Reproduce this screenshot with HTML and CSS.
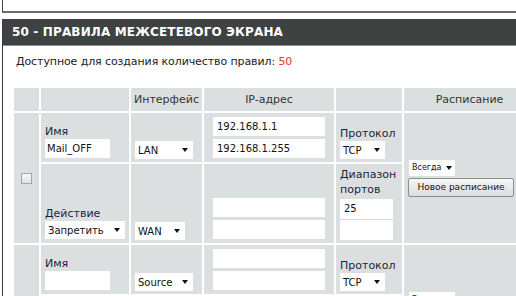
FILE: index.html
```html
<!DOCTYPE html>
<html lang="ru">
<head>
<meta charset="utf-8">
<title>Правила межсетевого экрана</title>
<link rel="stylesheet" href="styles.css">
</head>
<body>
<div class="topbox"></div>
<section class="panel">
  <h2 class="panel-title">50 - ПРАВИЛА МЕЖСЕТЕВОГО ЭКРАНА</h2>
  <p class="avail">Доступное для создания количество правил: <span class="count">50</span></p>
  <table class="rules">
    <colgroup>
      <col class="c-check"><col class="c-name"><col class="c-iface"><col class="c-ip"><col class="c-proto"><col class="c-sched">
    </colgroup>
    <tr class="r-head">
      <td></td><td></td><td>Интерфейс</td><td>IP-адрес</td><td></td><td>Расписание</td>
    </tr>
    <tr class="r-top">
      <td rowspan="2" class="cell-check"><input type="checkbox" class="chk"></td>
      <td class="cell-name"><span class="lbl">Имя</span><input class="inp inp-name" value="Mail_OFF"></td>
      <td class="cell-iface"><span class="sel sel-58"><span class="sel-val">LAN</span><span class="caret"></span></span></td>
      <td class="cell-ip"><input class="inp inp-ip" value="192.168.1.1"><input class="inp inp-ip" value="192.168.1.255"></td>
      <td class="cell-proto"><span class="lbl">Протокол</span><span class="sel sel-45"><span class="sel-val">TCP</span><span class="caret"></span></span></td>
      <td rowspan="2" class="cell-sched"><span class="sel sel-46 sel-small"><span class="sel-val">Всегда</span><span class="caret"></span></span><button class="btn">Новое расписание</button></td>
    </tr>
    <tr class="r-bot">
      <td class="cell-name"><span class="lbl">Действие</span><span class="sel sel-80"><span class="sel-val">Запретить</span><span class="caret"></span></span></td>
      <td class="cell-iface"><span class="sel sel-50"><span class="sel-val">WAN</span><span class="caret"></span></span></td>
      <td class="cell-ip"><input class="inp inp-ip" value=""><input class="inp inp-ip" value=""></td>
      <td class="cell-proto"><span class="lbl">Диапазон<br>портов</span><input class="inp inp-port" value="25"><input class="inp inp-port inp-port2" value=""></td>
    </tr>
    <tr class="r-top">
      <td rowspan="2" class="cell-check"><input type="checkbox" class="chk"></td>
      <td class="cell-name"><span class="lbl">Имя</span><input class="inp inp-name" value=""></td>
      <td class="cell-iface"><span class="sel sel-58"><span class="sel-val">Source</span><span class="caret"></span></span></td>
      <td class="cell-ip"><input class="inp inp-ip" value=""><input class="inp inp-ip" value=""></td>
      <td class="cell-proto"><span class="lbl">Протокол</span><span class="sel sel-45"><span class="sel-val">TCP</span><span class="caret"></span></span></td>
      <td rowspan="2" class="cell-sched"><span class="sel sel-46 sel-small"><span class="sel-val">Всегда</span><span class="caret"></span></span><button class="btn">Новое расписание</button></td>
    </tr>
    <tr class="r-bot">
      <td class="cell-name"><span class="lbl">Действие</span><span class="sel sel-80"><span class="sel-val">Разрешить</span><span class="caret"></span></span></td>
      <td class="cell-iface"><span class="sel sel-50"><span class="sel-val">WAN</span><span class="caret"></span></span></td>
      <td class="cell-ip"><input class="inp inp-ip" value=""><input class="inp inp-ip" value=""></td>
      <td class="cell-proto"><span class="lbl">Диапазон<br>портов</span><input class="inp inp-port" value=""><input class="inp inp-port inp-port2" value=""></td>
    </tr>
  </table>
</section>
</body>
</html>
```

FILE: styles.css
```css
html, body {
  margin: 0;
  padding: 0;
  overflow: hidden;
  background: #ffffff;
  font-family: "DejaVu Sans", Verdana, sans-serif;
  color: #222233;
}

.topbox {
  width: 600px;
  height: 11px;
  margin-left: 2px;
  border-left: 1px solid #444;
  border-bottom: 2px solid #6c6c6c;
}

.panel {
  width: 620px;
  margin: 6px 0 0 2px;
  border-left: 1px solid #3a3a3a;
  padding-bottom: 40px;
}

.panel-title {
  margin: 0;
  height: 26px;
  line-height: 27px;
  padding-left: 9px;
  background: #3e4242;
  border-bottom: 1px solid #8e9292;
  color: #ffffff;
  font-size: 12px;
  font-weight: bold;
  letter-spacing: 0.15px;
}

.avail {
  margin: 9px 0 0;
  padding-left: 13px;
  font-size: 11px;
  line-height: 13px;
  letter-spacing: -0.1px;
  color: #222;
}

.count {
  color: #e8342b;
}

.rules {
  margin: 18px 0 0 9px;
  border-collapse: separate;
  border-spacing: 2px;
  table-layout: fixed;
  width: 525px;
  font-size: 11px;
}

.c-check { width: 25px; }
.c-name { width: 88px; }
.c-iface { width: 71px; }
.c-ip { width: 130px; }
.c-proto { width: 66px; }
.c-sched { width: 131px; }

.rules td {
  background: #dcdfe0;
  padding: 0 4px 4px;
  vertical-align: bottom;
  box-sizing: border-box;
}

.r-head td {
  height: 23px;
  padding: 0;
  text-align: center;
  vertical-align: middle;
  color: #333;
  font-size: 11px;
}

.r-top td { height: 49px; }
.r-bot td { height: 79px; }

.rules td.cell-check {
  padding: 0;
  text-align: center;
  vertical-align: middle;
}

.chk {
  appearance: none;
  -webkit-appearance: none;
  width: 11px;
  height: 11px;
  margin: 0;
  border: 1px solid #a2a6a8;
  background: linear-gradient(#f6f6f6, #e0e2e2);
  vertical-align: middle;
}

.lbl {
  display: block;
  line-height: 15px;
  font-size: 11px;
  color: #1d1f3a;
}

.inp {
  display: block;
  box-sizing: border-box;
  height: 19px;
  margin: 0;
  padding: 0 2px;
  border: 0;
  background: #ffffff;
  font-family: "DejaVu Sans", Verdana, sans-serif;
  font-size: 10px;
  line-height: 19px;
  color: #111;
  outline: none;
}

.inp-name { width: 65px; }

.rules td.cell-ip {
  padding: 0 0 4px;
}

.inp-ip {
  width: 112px;
  margin: 3px auto 0;
  padding: 0 4px;
}

.rules td.cell-iface,
.rules td.cell-proto {
  padding-bottom: 3px;
}

.inp-port {
  width: 53px;
  height: 20px;
  margin-top: 2px;
  padding: 0 4px;
  line-height: 20px;
}

.inp-port2 {
  margin-top: 1px;
}

.sel {
  display: flex;
  align-items: center;
  box-sizing: border-box;
  height: 18px;
  padding: 0 5px 0 3px;
  background: #ffffff;
  font-size: 10px;
  color: #111;
}

.sel-val {
  flex: 1;
}

.caret {
  width: 0;
  height: 0;
  border-left: 3.5px solid transparent;
  border-right: 3.5px solid transparent;
  border-top: 4px solid #111;
}

.sel-45 { width: 45px; }
.sel-46 { width: 46px; }
.sel-50 { width: 50px; }
.sel-58 { width: 58px; }
.sel-80 { width: 80px; }

.sel-small {
  width: 46px;
  height: 16px;
  margin-left: 1px;
  padding-right: 3px;
  font-size: 8px;
}

.rules td.cell-sched {
  vertical-align: middle;
  padding: 0 0 0 4px;
}

.btn {
  display: block;
  box-sizing: border-box;
  width: 106px;
  height: 19px;
  margin-top: 2px;
  padding: 0;
  border: 1px solid #8c8e90;
  border-radius: 2px;
  background: linear-gradient(#f7f7f7, #dcdcdc);
  font-family: "DejaVu Sans", Verdana, sans-serif;
  font-size: 9px;
  color: #111;
}
```
